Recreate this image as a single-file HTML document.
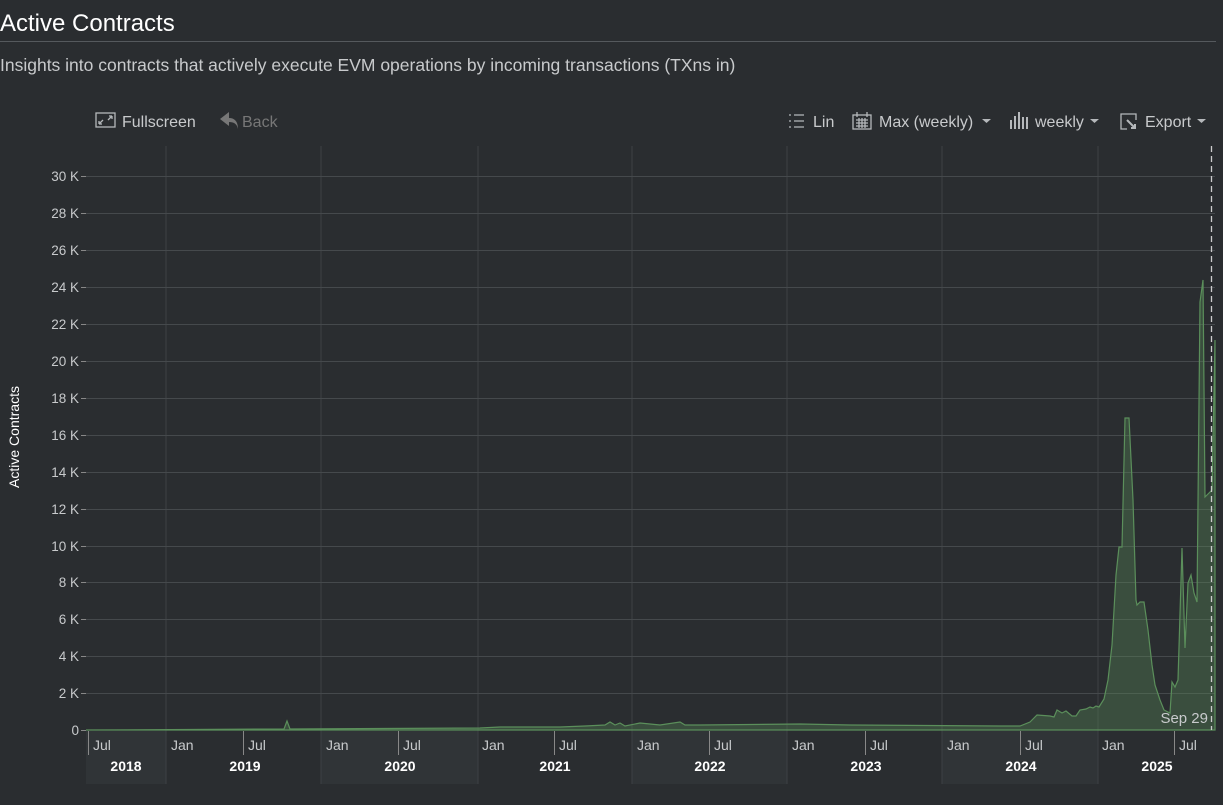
<!DOCTYPE html>
<html><head><meta charset="utf-8"><style>
body{margin:0;background:#2a2d30;width:1223px;height:805px;overflow:hidden;font-family:"Liberation Sans",sans-serif;}
h1{position:absolute;left:0;top:10px;margin:0;font-size:24px;font-weight:normal;color:#fff;}
.hr{position:absolute;left:0;top:41px;width:1216px;height:1px;background:#55595d;}
.sub{position:absolute;left:0;top:55px;font-size:17.5px;color:#c8cacc;}
</style></head><body>
<h1>Active Contracts</h1><div class="hr"></div>
<div class="sub">Insights into contracts that actively execute EVM operations by incoming transactions (TXns in)</div>
<svg style="position:absolute;left:0;top:0" width="1223" height="805">
<g fill="none" stroke="#b5b8bb" stroke-width="1.3">
<rect x="96" y="113" width="19" height="14"/><path d="M99 124l4-4M99 124h3M99 124v-3M112 116l-4 4M112 116h-3M112 116v3"/>
<path d="M789 115h2M789 121h2M789 127h2M794 115h10M794 121h10M794 127h10" />
<rect x="853" y="115" width="18" height="14"/><path d="M857 112v5M867 112v5M856 120h12M856 123h12M856 126h12M859 118v10M862 118v10M865 118v10"/>
<path d="M1011 120v9M1015 116v13M1019 112v17M1023 117v12M1027 117v12" stroke-width="2"/>
<path d="M1127 129h-6v-15h15v6"/><path d="M1127 120l8 8M1131 128h4v-4" stroke-width="2"/>
</g>
<path d="M229 112l-9 7 9 7v-4c5 0 8 2 9 7 0-7-3-11-9-11z" fill="#777"/>
<g fill="#b5b8bb"><path d="M982 119h9l-4.5 4z"/><path d="M1090 119h9l-4.5 4z"/><path d="M1197 119h9l-4.5 4z"/></g>
<g font-size="16" fill="#c8cacc"><text x="122" y="127">Fullscreen</text><text x="242" y="127" fill="#777">Back</text>
<text x="813" y="127">Lin</text><text x="879" y="127">Max (weekly)</text><text x="1035" y="127">weekly</text><text x="1145" y="127">Export</text></g>
<g fill="#303437"><rect x="86" y="731" width="80" height="53"/><rect x="321" y="731" width="157" height="53"/><rect x="632" y="731" width="155" height="53"/><rect x="942" y="731" width="156" height="53"/></g>
<g stroke="#3d4144" stroke-width="1">
<path d="M166 146V784M321 146V784M478 146V784M632 146V784M787 146V784M942 146V784M1098 146V784"/>
</g>
<g stroke="#45494c" stroke-width="1">
<path d="M86 176.5H1215M86 213.5H1215M86 250.5H1215M86 287.5H1215M86 324.5H1215M86 361.5H1215M86 398.5H1215M86 435.5H1215M86 472.5H1215M86 509.5H1215M86 546.5H1215M86 582.5H1215M86 619.5H1215M86 656.5H1215M86 693.5H1215"/>
</g>
<g stroke="#888" stroke-width="1"><path d="M81 176.5h5M81 213.5h5M81 250.5h5M81 287.5h5M81 324.5h5M81 361.5h5M81 398.5h5M81 435.5h5M81 472.5h5M81 509.5h5M81 546.5h5M81 582.5h5M81 619.5h5M81 656.5h5M81 693.5h5M81 730.5h5"/>
<path d="M88.5 731v24M243.5 731v24M398.5 731v24M554.5 731v24M709.5 731v24M865.5 731v24M1020.5 731v24M1174.5 731v24"/></g>
<g font-size="13.5" fill="#c8cacc" text-anchor="end">
<text x="79" y="181">30 K</text><text x="79" y="218">28 K</text><text x="79" y="255">26 K</text><text x="79" y="292">24 K</text><text x="79" y="329">22 K</text><text x="79" y="366">20 K</text><text x="79" y="403">18 K</text><text x="79" y="440">16 K</text><text x="79" y="477">14 K</text><text x="79" y="514">12 K</text><text x="79" y="551">10 K</text><text x="79" y="587">8 K</text><text x="79" y="624">6 K</text><text x="79" y="661">4 K</text><text x="79" y="698">2 K</text><text x="79" y="735">0</text></g>
<text transform="translate(19,437) rotate(-90)" font-size="14" fill="#fff" text-anchor="middle">Active Contracts</text>
<g font-size="14" fill="#c8cacc">
<text x="93" y="750">Jul</text><text x="171" y="750">Jan</text><text x="248" y="750">Jul</text><text x="326" y="750">Jan</text><text x="403" y="750">Jul</text><text x="482" y="750">Jan</text><text x="559" y="750">Jul</text><text x="637" y="750">Jan</text><text x="714" y="750">Jul</text><text x="792" y="750">Jan</text><text x="870" y="750">Jul</text><text x="947" y="750">Jan</text><text x="1025" y="750">Jul</text><text x="1102" y="750">Jan</text><text x="1179" y="750">Jul</text></g>
<g font-size="14" font-weight="bold" fill="#fff" text-anchor="middle">
<text x="126" y="771">2018</text><text x="245" y="771">2019</text><text x="400" y="771">2020</text><text x="555" y="771">2021</text><text x="710" y="771">2022</text><text x="866" y="771">2023</text><text x="1021" y="771">2024</text><text x="1157" y="771">2025</text></g>
<path fill="rgba(90,140,90,0.35)" stroke="#5b8f5b" stroke-width="1.2" d="M86 730L284 729L287 721L290 729L480 728L500 727L560 727L585 726L605 725L610 722L615 725L620 723L625 726L640 723L660 725L680 722L685 725L700 725L800 724L850 725L1000 726L1020 726L1030 722L1037 715L1050 716L1054 717L1057 710L1062 713L1066 711L1072 716L1076 716L1080 710L1086 709L1090 707L1093 708L1096 706L1099 707L1104 699L1108 680L1112 645L1116 575L1119 547L1122 547L1125 418L1129 418L1133 500L1136 600L1137 605L1140 602L1144 602L1148 630L1152 665L1155 685L1160 700L1164 710L1170 713L1172 682L1175 687L1178 680L1182 548L1185 648L1188 583L1191 575L1194 593L1197 602L1200 302L1203 280L1205 497L1212 490L1215 340L1215 730Z"/>
<path d="M1211.5 146V730" stroke="#ccc" stroke-width="1.3" stroke-dasharray="6,4"/>
<text x="1208" y="723" font-size="15" fill="#c8cacc" text-anchor="end">Sep 29</text>
</svg>
</body></html>
